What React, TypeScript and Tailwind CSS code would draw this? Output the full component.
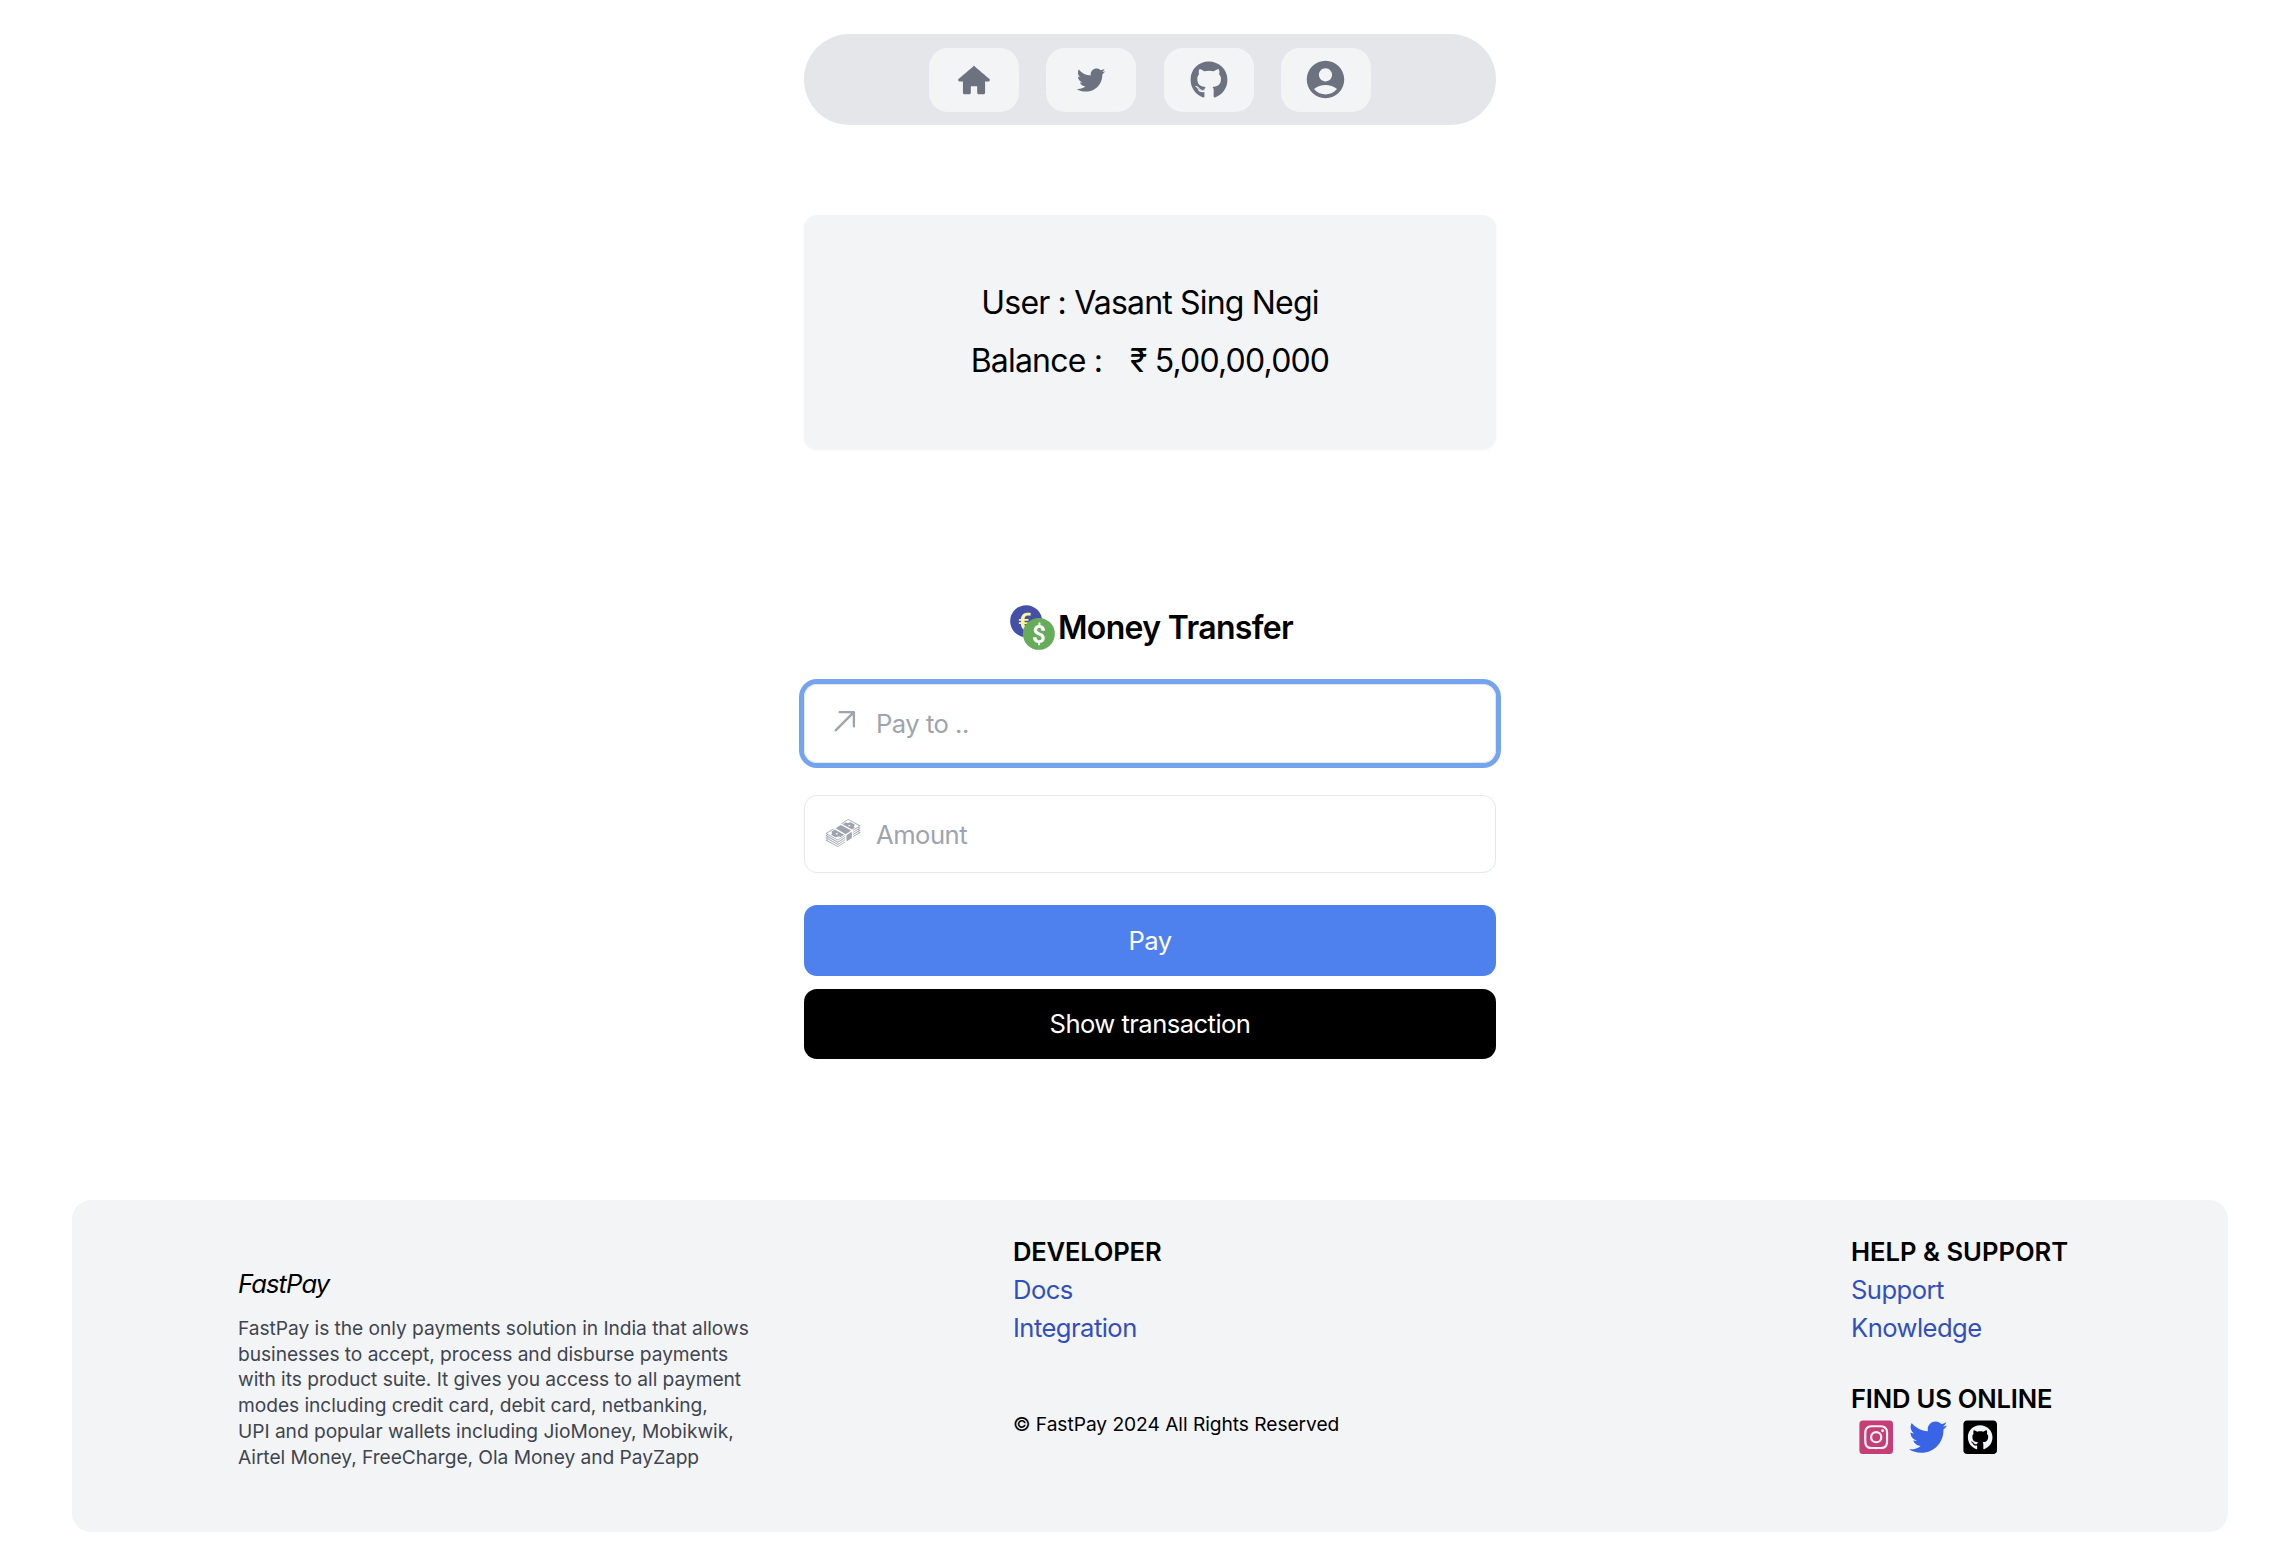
import React from "react";
import { TiHome, TiSocialTwitter } from "react-icons/ti";
import { FaGithub, FaInstagramSquare, FaTwitter, FaGithubSquare } from "react-icons/fa";
import { MdAccountCircle } from "react-icons/md";
import { FcCurrencyExchange } from "react-icons/fc";
import { GoArrowUpRight } from "react-icons/go";
import { GiMoneyStack } from "react-icons/gi";

const about = [
  "FastPay is the only payments solution in India that allows",
  "businesses to accept, process and disburse payments",
  "with its product suite. It gives you access to all payment",
  "modes including credit card, debit card, netbanking,",
  "UPI and popular wallets including JioMoney, Mobikwik,",
  "Airtel Money, FreeCharge, Ola Money and PayZapp",
];

function NavButton({ label, children }: { label: string; children: React.ReactNode }) {
  return (
    <button aria-label={label} className="flex h-16 w-[90px] items-center justify-center rounded-[19px] bg-[#f3f4f6] text-[#6c727f]">
      {children}
    </button>
  );
}

function FooterLink({ children }: { children: React.ReactNode }) {
  return <a className="block tracking-[-0.55px] text-[#324fbe]">{children}</a>;
}

export default function App() {
  return (
    <div className="flex h-[1547px] flex-col items-center overflow-hidden bg-white pt-[34px] pl-[7px] font-['Inter',sans-serif] text-[25.6px] leading-[38px] text-black">
      <div className="flex w-[692px] flex-col">
        <nav className="flex h-[91px] items-center justify-center gap-[27.3px] rounded-full bg-[#e5e6ea]">
          <NavButton label="Home"><TiHome size={38} /></NavButton>
          <NavButton label="Twitter"><TiSocialTwitter size={38} /></NavButton>
          <NavButton label="GitHub"><FaGithub size={38} /></NavButton>
          <NavButton label="Account"><MdAccountCircle size={45} /></NavButton>
        </nav>

        <section className="mt-[90px] flex h-[233px] flex-col items-center justify-center rounded-[13px] bg-[#f3f4f6] text-[32px] leading-[45px] tracking-[-0.82px] shadow-[0_2px_3px_rgba(0,0,0,0.05)]">
          <p>User : Vasant Sing Negi</p>
          <p className="mt-[13px] flex"><span>Balance :</span><span className="ml-[28px]">₹ 5,00,00,000</span></p>
        </section>

        <h1 className="mt-[154px] flex h-[51px] items-center justify-center text-[32px] font-semibold tracking-[-0.67px]">
          <FcCurrencyExchange size={51} className="[&>circle:first-of-type]:fill-[#4450a8] [&>circle:last-of-type]:fill-[#67ac5b]" />
          <span>Money Transfer</span>
        </h1>

        <label className="mt-[31px] flex h-[79px] items-center rounded-[13px] border border-[#e5e7eb] pl-[20px] text-[#9ea3ae] ring-5 ring-[#74a4ee]">
          <GoArrowUpRight size={38} className="mb-1" />
          <input placeholder="Pay to .." className="ml-[13px] w-96 tracking-[-0.5px] outline-none placeholder:text-[#9ea3ae]" />
        </label>
        <label className="mt-[32px] flex h-[78px] items-center rounded-[13px] border border-[#e5e7eb] pt-[2px] pl-[19px] text-[#9ea3ae]">
          <GiMoneyStack size={38} className="mb-1" />
          <input placeholder="Amount" className="ml-[14px] w-96 tracking-[-0.5px] outline-none placeholder:text-[#9ea3ae]" />
        </label>
        <button className="mt-[32px] h-[71px] rounded-[13px] bg-[#4f81ee] tracking-[-0.55px] text-white">Pay</button>
        <button className="mt-[13px] h-[70px] rounded-[13px] bg-black tracking-[-0.55px] text-white">Show transaction</button>
      </div>

      <footer className="mt-[141px] flex h-[332px] w-[2156px] shrink-0 rounded-[19px] bg-[#f3f4f6]">
        <div className="ml-[166px] w-[775px] pt-[65px]">
          <h2 className="tracking-[-0.9px] italic">FastPay</h2>
          <p className="mt-[13px] text-[19.2px] leading-[25.7px] tracking-[-0.05px] text-[#3f4551]">
            {about.map((line) => (
              <span key={line} className="block whitespace-nowrap">{line}</span>
            ))}
          </p>
        </div>
        <div className="w-[838px] pt-[33px]">
          <h2 className="font-semibold tracking-[-0.2px]">DEVELOPER</h2>
          <FooterLink>Docs</FooterLink>
          <FooterLink>Integration</FooterLink>
          <p className="mt-[64px] text-[19.2px] leading-[26px] tracking-[-0.05px]">© FastPay 2024 All Rights Reserved</p>
        </div>
        <div className="pt-[33px]">
          <h2 className="font-semibold">HELP &amp; SUPPORT</h2>
          <FooterLink>Support</FooterLink>
          <FooterLink>Knowledge</FooterLink>
          <h2 className="mt-[33px] font-semibold tracking-[-0.2px]">FIND US ONLINE</h2>
          <div className="flex items-center gap-[13.5px] pl-[6px]">
            <FaInstagramSquare size={38.4} className="text-[#c73d76]" />
            <FaTwitter size={38.4} className="text-[#3964e5]" />
            <FaGithubSquare size={38.4} />
          </div>
        </div>
      </footer>
    </div>
  );
}
